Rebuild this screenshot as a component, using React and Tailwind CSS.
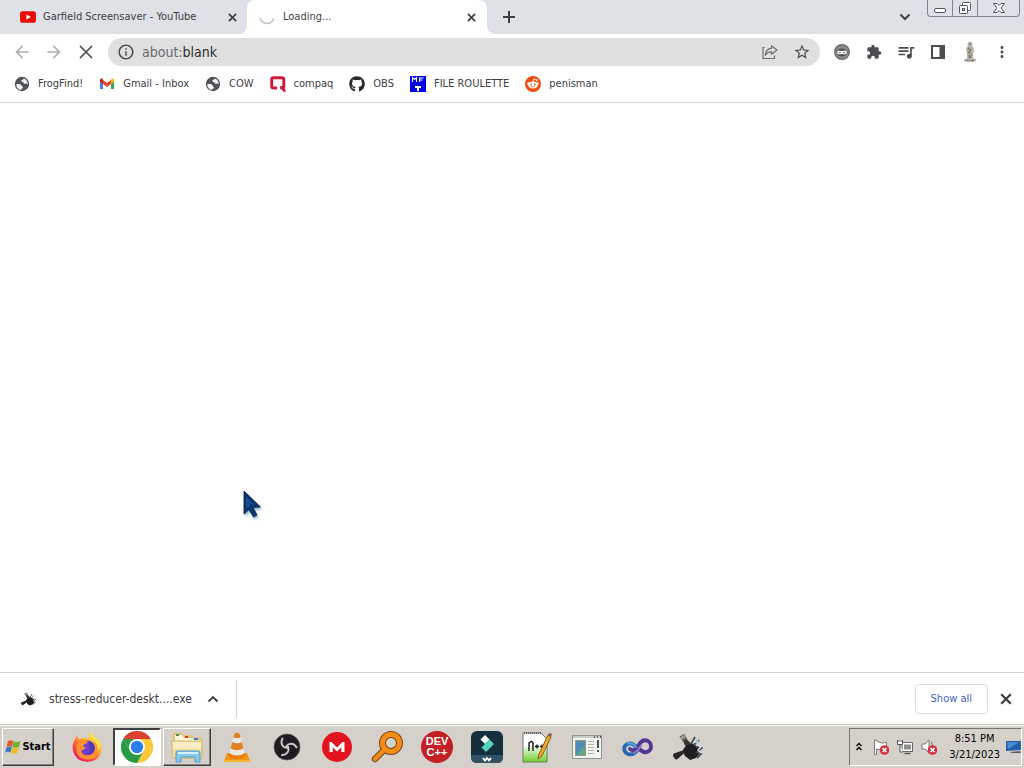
import React from "react";
import {
  MdArrowBack,
  MdArrowForward,
  MdInfoOutline,
  MdStarBorder,
  MdExtension,
  MdQueueMusic,
  MdMoreVert,
} from "react-icons/md";
import { FaGithub } from "react-icons/fa";

const CloseIcon = ({ className }) => (
  <svg viewBox="0 0 10 10" className={className} fill="none" stroke="currentColor" strokeWidth="1.900" aria-hidden="true">
    <path d="m1 1 8 8M9 1 1 9" />
  </svg>
);

const PlusIcon = () => (
  <svg viewBox="0 0 12 12" className="size-3" fill="none" stroke="currentColor" strokeWidth="2" aria-hidden="true">
    <path d="M6 0v12M0 6h12" />
  </svg>
);

const ChevronDown = () => (
  <svg viewBox="0 0 12 8" className="h-2 w-3" fill="none" stroke="currentColor" strokeWidth="2" aria-hidden="true">
    <path d="m1.500 1.500 4.500 4.500 4.500-4.500" />
  </svg>
);

const ChevronUp = () => (
  <svg viewBox="0 0 12 8" className="h-2 w-3" fill="none" stroke="currentColor" strokeWidth="1.800" aria-hidden="true">
    <path d="m1.500 6.500 4.500-4.500 4.500 4.500" />
  </svg>
);

const GlobeIcon = () => (
  <svg viewBox="0 0 16 16" className="size-4" aria-hidden="true">
    <circle cx="8" cy="8" r="7.200" fill="#505357" />
    <path d="M2.300 8.200c2.200-.3 4.800-.1 5.100 1.300.2 1 1.700.8 1.500 2.200-.1 1-1.700 1-1.900 2.200-2.800-.4-4.900-2.900-4.700-5.700z" fill="#f4f4f4" />
    <path d="M9.600 2.600c.3 1.300-2.500 1.200-2.300 2.500.2 1.200 2 .6 2.400 1.700.4 1.200 1.700 1.400 2.300.8.600-.6 1.100.2 1.800.9.100-2.800-1.600-5.100-4.200-5.900z" fill="#f4f4f4" />
  </svg>
);

const YouTubeIcon = () => (
  <svg viewBox="0 0 16 16" className="size-4 shrink-0" aria-hidden="true">
    <rect x="0" y="2.300" width="16" height="11.400" rx="2.800" fill="#f00a0a" />
    <path d="M6.400 5.400v5.200L11 8z" fill="#fff" />
  </svg>
);

const GmailIcon = () => (
  <svg viewBox="0 0 16 16" className="size-4" aria-hidden="true">
    <path d="M1 4.200v8.900h3V7z" fill="#4285f4" />
    <path d="M15 4.200v8.900h-3V7z" fill="#34a853" />
    <path d="M12 4.300V8l3-2.300V4c0-1.500-1.600-2-2.600-1.200z" fill="#fbbc04" />
    <path d="M4 8V4l4 3.100L12 4v4l-4 3z" fill="#ea4335" />
    <path d="M1 4v1.700L4 8V4.300L3.600 2.800C2.600 2 1 2.500 1 4z" fill="#c5221f" />
  </svg>
);

const CompaqIcon = () => (
  <svg viewBox="0 0 16 16" className="size-4" aria-hidden="true">
    <path
      d="M7 12H3.500Q1.700 12 1.700 10.200V3.600Q1.700 1.800 3.500 1.800H12Q13.800 1.800 13.800 3.600V10.500Q13.800 11.800 12.300 11.800H10.200"
      fill="none"
      stroke="#cf1736"
      strokeWidth="2.900"
    />
    <path d="M9.500 10.500h4.500L16 15.800h-2.500z" fill="#cf1736" />
  </svg>
);

const FileIcon = () => (
  <svg viewBox="0 0 16 16" className="size-4" aria-hidden="true">
    <path d="M0 0h16v16H0z" fill="#0000e8" />
    <path d="M2.500 6V1.500l2 2 2-2V6M9.500 6V2h4M9.500 4h3" fill="none" stroke="#fff" strokeWidth="1.100" />
    <path d="M5 10h6v2H9v3H7v-3H5z" fill="#fff" />
  </svg>
);

const RedditIcon = () => (
  <svg viewBox="0 0 16 16" className="size-4" aria-hidden="true">
    <circle cx="8" cy="8" r="8" fill="#f24a0c" />
    <path d="M8 6l.7-3 2.600.6" fill="none" stroke="#fff" strokeWidth=".8" />
    <circle cx="11.600" cy="3.900" r="1" fill="#fff" />
    <circle cx="3.500" cy="7.700" r="1.400" fill="#fff" />
    <circle cx="12.500" cy="7.700" r="1.400" fill="#fff" />
    <ellipse cx="8" cy="9" rx="4.700" ry="3.400" fill="#fff" />
    <circle cx="6.100" cy="8.400" r=".9" fill="#f24a0c" />
    <circle cx="9.900" cy="8.400" r=".9" fill="#f24a0c" />
    <path d="M6 10.400q2 1.300 4 0" fill="none" stroke="#f24a0c" strokeWidth=".7" />
  </svg>
);

const SpinnerIcon = () => (
  <svg viewBox="0 0 16 16" className="size-4 shrink-0" aria-hidden="true">
    <path d="M1.200 9a7 7 0 0 0 13.500.5" fill="none" stroke="#c9cbd2" strokeWidth="1.800" />
  </svg>
);

const ShareIcon = () => (
  <svg viewBox="0 0 18 18" className="size-[18px]" fill="none" stroke="#6b6d70" strokeWidth="1.200" aria-hidden="true">
    <path d="M3.500 4.500H2v11h11.500v-3" />
    <path d="M10.500 2.800 16 7l-5.500 4.200V8.800C7.500 8.700 6 9.800 4.300 12.300 4.700 7.800 7.200 5.600 10.500 5.200z" strokeLinejoin="round" />
  </svg>
);

const IncognitoBadge = () => (
  <svg viewBox="0 0 16 16" className="size-4" aria-hidden="true">
    <circle cx="8" cy="8" r="8" fill="#6c6c6c" />
    <circle cx="8" cy="8" r="6.600" fill="#8d8d8d" />
    <path d="M2.500 6.500Q8 2.500 13.500 6.500L12.800 10Q11 12.800 8 12.600 5 12.800 3.200 10z" fill="#484848" />
    <path d="M3.300 6.800q2.500-.8 4.700.2 2.200-1 4.700-.2v2.700Q10.500 11.200 8 10 5.500 11.200 3.300 9.500z" fill="#f1f1f1" />
    <circle cx="6" cy="8.500" r=".8" fill="#666" />
    <circle cx="10" cy="8.500" r=".8" fill="#666" />
  </svg>
);

const SidePanelIcon = () => (
  <svg viewBox="0 0 14 14" className="size-3.5" aria-hidden="true">
    <path d="M1 1h12v12H1z" fill="#fff" stroke="#4b4d50" strokeWidth="2" />
    <path d="M8.500 1H13v12H8.500z" fill="#4b4d50" />
  </svg>
);

const StatueIcon = () => (
  <svg viewBox="0 0 14 22" className="h-[22px] w-3.5" aria-hidden="true">
    <path d="M1 20q0-2.500 3-2.600L4 11 3 9.600 3.600 6l1.400-.8Q3.500.9 7 .8q3.500.1 2 4.400L10.400 6l.8 4-1.300 2 .5 5.400q3 .1 3 2.600Q7 22 1 20z" fill="#b7b3a6" />
    <path d="M5 7l2.500 2L5.500 11.500l3 1M6 3h2M5.800 14l1 3 2-3M2.500 19.500h3m2 0H11" fill="none" stroke="#77756c" strokeWidth="1.200" />
  </svg>
);

const HammerIcon = ({ small }) => (
  <svg viewBox="0 0 32 32" className={small ? "size-4 shrink-0" : "size-8"} aria-hidden="true">
    <path d="M17 17 7 25" stroke="#37302d" strokeWidth="3.500" />
    <path d="m10 20-7 2.500Q1 24 3 26.500q1.500 3 3.500 1.500l5.500-5z" fill="#2b2423" />
    <path d="m8.500 5.500 5-2.500 3 6 4 4-5 5-3-7z" fill="#3a3635" />
    <path d="m9 6 4.500-2.500 1.500 3-4.500 2.500z" fill="#a09a95" />
    <path d="m11.500 10 4.500-3" stroke="#827d79" />
    <path d="m13 17 7-5 7 4 2 6-4 5-6 2-5-4-2-4z" fill="#1e1e20" />
    <path d="m20 13 4-7M23 14l5-5M25 16l6 1-5 4 4 2-4 4" fill="none" stroke="#45505b" strokeWidth="1.800" />
    <path d="m23 10 3 2 1-3m0 5 3 2-3 3 3 3" fill="none" stroke="#dfe8ef" strokeWidth="1.200" />
  </svg>
);

const CursorIcon = () => (
  <svg viewBox="0 0 24 32" className="h-8 w-6 drop-shadow-[1px_2px_1px_rgba(80,150,180,0.7)]" aria-hidden="true">
    <path d="M1 1v23l5-4.500 4.500 7.500 3.500-2-4-7.500 7.500-.5z" fill="#0b3470" stroke="#0a2147" strokeWidth=".8" />
    <path d="M3 7v12l3-3 2 1-1-3 5 1z" fill="#174c91" />
  </svg>
);

const WindowsFlag = () => (
  <svg viewBox="0 0 16 16" className="size-4 shrink-0" aria-hidden="true">
    <path d="M3 2.200q2.600-1.800 5.200-.2L6.900 7.700q-2.800-1.400-5.400.2z" fill="#e2562a" />
    <path d="M8.600 2.300q3.200 1.500 7 0L14 8q-3.500 1.400-6.700-.1z" fill="#76ad35" />
    <path d="M1.400 8.400q2.600-1.600 5.400-.2L5.400 13.600Q2.700 12 .1 13.800z" fill="#3878c2" />
    <path d="M7.200 8.500q3.200 1.400 6.600 0l-1.600 5.600q-3.300 1.300-6.400-.3z" fill="#f3b728" />
  </svg>
);

const FirefoxIcon = () => (
  <svg viewBox="0 0 32 32" className="size-8" aria-hidden="true">
    <defs>
      <linearGradient id="fox" x1=".85" y1=".1" x2=".2" y2=".95">
        <stop offset="0" stopColor="#fff04a" />
        <stop offset=".35" stopColor="#ffb12c" />
        <stop offset=".65" stopColor="#ff5b36" />
        <stop offset="1" stopColor="#e8196f" />
      </linearGradient>
    </defs>
    <path d="M4 8.500q.5-2.500 2-4 .5 2.500 2.500 4Q11 6 14.500 7l2 1q3-2.500 2-7 4 2 6.500 7l1.500-1q4.500 6 4 12-1.500 11-14 12Q4 30 2 20 .500 13 4 8.500z" fill="url(#fox)" />
    <circle cx="16.500" cy="17" r="7.500" fill="#6b3fd0" />
    <path d="M6.500 12.500q4-4.500 10-2.500 1 2-3.500 3.500l-1 1.500 3 2-5 3q1.500 4.500 7 4.500 7.500-.5 7.500-8 0-4-3-6.500 8 3 6.500 11-3 8-12 7.500Q6 27.500 5.500 19q-.5-4 1-6.500z" fill="#ff9130" />
    <path d="M18 10q6 1.500 5.500 7.500-1 5-6.500 5.500 3-3 2-7.500-.5-3-1-5.500z" fill="#5437b5" />
    <path d="M20 7q8 5 6.500 14 4-6 1-12l-2-2 1 4q-3-5-7-7z" fill="#ffe04b" />
  </svg>
);

const ChromeIcon = () => (
  <svg viewBox="0 0 32 32" className="size-8" aria-hidden="true">
    <path d="M16 16 2.140 8A16 16 0 0 1 29.860 8z" fill="#dc4030" />
    <path d="M16 8h13.860A16 16 0 0 1 16 32l6.930-12z" fill="#fcc934" />
    <path d="M2.140 8A16 16 0 0 0 16 32l6.930-12L16 16 9.070 20z" fill="#2b9a47" />
    <path d="M2.140 8 9.070 20 16 8z" fill="#2b9a47" />
    <path d="M2.140 8 16 8H29.860" fill="none" />
    <circle cx="16" cy="16" r="8" fill="#fff" />
    <circle cx="16" cy="16" r="6.200" fill="#2b7de9" />
  </svg>
);

const ExplorerIcon = () => (
  <svg viewBox="0 0 34 32" className="h-8 w-[34px]" aria-hidden="true">
    <path d="M3 4q0-2 2-2h7l2 2h8l2 2h7l1 2v20H3z" fill="#dfc47a" />
    <path d="M5 4h7l2 3h8l2 2h7v4H5z" fill="#fff7d5" />
    <path d="M6 3h3v2H6z" fill="#3a9b4c" />
    <path d="M15 5h3v2h-3z" fill="#cf4339" />
    <path d="M24 7h4v2h-4z" fill="#3681c3" />
    <path d="M2 10h30v17H2z" fill="#f0dd9c" stroke="#cfb970" />
    <path d="M3 11h28v7H3z" fill="#f8ecc0" />
    <path d="M6 31V22q0-2 2-2h20q2 0 2 2v9h-5v-5H11v5z" fill="#83c9ed" stroke="#4a9dce" />
    <path d="M8 22h20" stroke="#d4f0fc" strokeWidth="2" />
  </svg>
);

const VlcIcon = () => (
  <svg viewBox="0 0 32 32" className="size-8" aria-hidden="true">
    <path d="M6 22h20l3 8H3z" fill="#f49419" />
    <path d="M3 29h26v2H3z" fill="#fbb62f" />
    <path d="M13.500 2.500q2.500-1.500 5 0L24 24q-8 5-16 0z" fill="#ece9e4" />
    <path d="M13.500 2.500q2.500-1.500 5 0l1 4q-3.500 1.500-7 0zM11.300 11q4.700 2.500 9.400 0l1.700 6.500q-6.400 3.500-12.800 0z" fill="#e08222" />
    <path d="M8 22q8 5 16 0l1 3.500q-9 5-18 0z" fill="#e97d13" />
  </svg>
);

const ObsIcon = () => (
  <svg viewBox="0 0 28 28" className="size-7" aria-hidden="true">
    <circle cx="14" cy="14" r="13" fill="#1e1c1f" stroke="#5a585a" strokeWidth=".8" />
    <g fill="none" stroke="#c9c7ca" strokeWidth="1.900" strokeLinecap="round">
      <path d="M14 15C9.500 14.500 7 10.500 9.500 5.500" />
      <path d="M14 15C9.500 14.500 7 10.500 9.500 5.500" transform="rotate(120 14 14)" />
      <path d="M14 15C9.500 14.500 7 10.500 9.500 5.500" transform="rotate(240 14 14)" />
    </g>
  </svg>
);

const MegaIcon = () => (
  <svg viewBox="0 0 30 30" className="size-[30px]" aria-hidden="true">
    <circle cx="15" cy="15" r="15" fill="#e3141f" />
    <path d="M7.500 20V10h2L15 15.500 20.500 10h2v10h-3.200v-4.800L15 19.500l-4.300-4.300V20z" fill="#fff" />
  </svg>
);

const SearchIcon = () => (
  <svg viewBox="0 0 32 32" className="size-8" aria-hidden="true">
    <path d="M14 18 4 28" stroke="#744318" strokeWidth="6.500" strokeLinecap="round" />
    <circle cx="20" cy="12" r="8.500" fill="none" stroke="#744318" strokeWidth="7" />
    <path d="M14 18 4 28" stroke="#f58c16" strokeWidth="4.500" strokeLinecap="round" />
    <circle cx="20" cy="12" r="8.500" fill="none" stroke="#f58c16" strokeWidth="5" />
  </svg>
);

const DevIcon = () => (
  <span className="flex size-8 flex-col items-center justify-center rounded-full bg-[#c51f26] font-['Liberation_Sans',sans-serif] text-[11px] leading-[11px] font-bold text-white">
    <span>DEV</span>
    <span>C++</span>
  </span>
);

const FilmoraIcon = () => (
  <svg viewBox="0 0 32 32" className="size-8" aria-hidden="true">
    <rect width="32" height="32" rx="6" fill="#14303f" />
    <path d="M0 24h32v2q0 6-6 6H6q-6 0-6-6z" fill="#315166" />
    <path d="m14 4 4.500 4.500L14 13 9.500 8.500z" fill="#f4ffff" />
    <path d="m18.500 8.500 4.500 4.500-8 8-4.500-4.500z" fill="#52d6bb" />
    <path d="m12 27 2 2.500 2-2.500 2 2.500 2-2.500" fill="none" stroke="#fff" strokeWidth="2" />
  </svg>
);

const NotepadIcon = () => (
  <svg viewBox="0 0 32 32" className="size-8" aria-hidden="true">
    <defs>
      <linearGradient id="note" x2="0" y2="1">
        <stop offset=".4" stopColor="#fff" />
        <stop offset="1" stopColor="#6fd02b" />
      </linearGradient>
    </defs>
    <path d="M2 2h18l6 6v23H2z" fill="url(#note)" stroke="#6e7d68" />
    <path d="M3 2h17" stroke="#666" strokeWidth="2" strokeDasharray="1 1" />
    <path d="M8 20v-8q3-3 4 0v8M14 15.500h4m-2-2v4M19 15.500h4m-2-2v4" fill="none" stroke="#161616" strokeWidth="1.400" />
    <path d="m27 4-9 19-1 5 4-3L30 6z" fill="#eca928" stroke="#85601f" />
    <path d="m27 4 3 2 1-3-3-1z" fill="#8e5948" />
  </svg>
);

const DocumentIcon = () => (
  <svg viewBox="0 0 32 32" className="size-8" aria-hidden="true">
    <path d="M1.500 4.500h29v23h-29z" fill="#f4f4ef" stroke="#8c9392" />
    <path d="M2 5h28v2H2z" fill="#c9cecb" />
    <path d="M23 5h1v2h-1zm3 0h1v2h-1zm3 0h1v2h-1z" fill="#555" />
    <path d="M4.500 9.500h10v15h-10z" fill="#4f8db4" stroke="#8b9996" />
    <path d="m5 24 9-9v9z" fill="#5ca780" />
    <path d="M17 10.500h6m-6 3h6m-6 3h6m-6 3h6m-6 3h6" stroke="#b0b3b1" />
    <path d="M27 9v8m0 2v2" stroke="#46565f" strokeWidth="2" />
  </svg>
);

const InfinityIcon = () => (
  <svg viewBox="0 0 32 32" className="size-8" fill="none" strokeLinecap="round" aria-hidden="true">
    <path d="M17 18.500C14 23 10 24 7 23c-5-2-5-8-.5-10 3-1.200 6 0 8 2.500" stroke="#2868b5" strokeWidth="3.800" />
    <path d="M9 18c4 3 6 0 9-4.500C20.500 9.500 24 8.500 27 10c4 2.500 4 8.500 0 10.500-3 1.500-6.500 0-9-3" stroke="#513792" strokeWidth="3.800" />
    <path d="M13 22q4-2 7-7.500" stroke="#8d78cb" strokeWidth="2" />
    <path d="M7 12.500q4-1 8 3.500" stroke="#55a9dc" strokeWidth="2" />
  </svg>
);

const RedBadge = () => (
  <g>
    <circle cx="11.500" cy="11" r="4.800" fill="#cf3441" />
    <path d="m9.500 9 4 4m0-4-4 4" stroke="#fff" strokeWidth="1.500" />
  </g>
);

const FlagTray = () => (
  <svg viewBox="0 0 16 16" className="size-4" aria-hidden="true">
    <path d="M1.500 1v14.500h2V10l5 1 5-1V3.500L8.500 4l-5-2V1z" fill="#fff" stroke="#7a7a7a" />
    <RedBadge />
  </svg>
);

const NetworkTray = () => (
  <svg viewBox="0 0 16 16" className="size-4" aria-hidden="true">
    <path d="M5 3.500h10.500v9H5z" fill="#fff" stroke="#666" />
    <path d="M7 5.500h7v5H7z" fill="#8d8f8c" />
    <path d="M7.500 14.500h6" stroke="#555" strokeWidth="1.500" />
    <path d="M.5 1v4.500h5V1M2 1v2m2-2v2M3 6v7h3" fill="#fff" stroke="#555" />
  </svg>
);

const VolumeTray = () => (
  <svg viewBox="0 0 16 16" className="size-4" aria-hidden="true">
    <path d="M1 5h3l4-4v13l-4-4H1z" fill="#fff" stroke="#777" />
    <path d="M10 3q2 2 1 4" fill="none" stroke="#777" />
    <RedBadge />
  </svg>
);

const DesktopTray = () => (
  <svg viewBox="0 0 16 16" className="size-4" aria-hidden="true">
    <path d="M1 2h15v9L1 12z" fill="#245ea9" />
    <path d="m2 3 12 .5L3 10z" fill="#498cd0" />
    <path d="m5 13 10-1 1 2H7z" fill="#555b62" />
  </svg>
);

const DoubleChevron = () => (
  <svg viewBox="0 0 8 10" className="h-2.5 w-2" fill="none" stroke="#111" strokeWidth="1.500" aria-hidden="true">
    <path d="m1.500 4 2.500-2.500L6.500 4m-5 4L4 5.500 6.500 8" />
  </svg>
);

const bookmarks = [
  { label: "FrogFind!", icon: <GlobeIcon /> },
  { label: "Gmail - Inbox", icon: <GmailIcon /> },
  { label: "COW", icon: <GlobeIcon /> },
  { label: "compaq", icon: <CompaqIcon /> },
  { label: "OBS", icon: <FaGithub className="size-4 text-[#24292e]" /> },
  { label: "FILE ROULETTE", icon: <FileIcon /> },
  { label: "penisman", icon: <RedditIcon /> },
];

const extensions = [
  { label: "Extension", icon: <IncognitoBadge /> },
  { label: "Extensions", icon: <MdExtension className="size-4" /> },
  { label: "Media controls", icon: <MdQueueMusic className="size-5" /> },
  { label: "Side panel", icon: <SidePanelIcon /> },
  { label: "Profile", icon: <StatueIcon /> },
  { label: "Menu", icon: <MdMoreVert className="size-[18px]" /> },
];

const raised =
  "border border-t-white border-l-white border-r-[#404040] border-b-[#404040] shadow-[inset_-1px_-1px_0_#808080]";

const apps = [
  { label: "Firefox", icon: <FirefoxIcon /> },
  {
    label: "Chrome",
    icon: <ChromeIcon />,
    frame: "border-2 border-t-[#404040] border-l-[#404040] border-r-white border-b-white bg-white",
  },
  { label: "File Explorer", icon: <ExplorerIcon />, frame: raised },
  { label: "VLC", icon: <VlcIcon /> },
  { label: "OBS Studio", icon: <ObsIcon /> },
  { label: "MEGA", icon: <MegaIcon /> },
  { label: "Search", icon: <SearchIcon /> },
  { label: "Dev-C++", icon: <DevIcon /> },
  { label: "Filmora", icon: <FilmoraIcon /> },
  { label: "Notepad++", icon: <NotepadIcon /> },
  { label: "Document viewer", icon: <DocumentIcon /> },
  { label: "Visual Studio", icon: <InfinityIcon /> },
  { label: "Stress Reducer", icon: <HammerIcon /> },
];

function TabStrip() {
  return (
    <header className="flex h-[34px] bg-white">
      <div className="flex w-[247px] items-center rounded-br-lg bg-[#dee1e6] pr-[7px] pl-5">
        <YouTubeIcon />
        <span className="ml-[7px] flex-1 truncate">Garfield Screensaver - YouTube</span>
        <button aria-label="Close tab" className="flex size-4 items-center justify-center">
          <CloseIcon className="size-[9px]" />
        </button>
      </div>
      <div className="w-60 bg-[#dee1e6]">
        <div className="flex h-full items-center rounded-t-lg bg-white pr-2 pl-3">
          <SpinnerIcon />
          <span className="ml-2 flex-1 truncate">Loading...</span>
          <button aria-label="Close tab" className="flex size-4 items-center justify-center">
            <CloseIcon className="size-[9px]" />
          </button>
        </div>
      </div>
      <div className="flex flex-1 items-start justify-between rounded-bl-lg bg-[#dee1e6] pr-1 pl-3">
        <button aria-label="New tab" className="flex h-[34px] w-5 items-center justify-center">
          <PlusIcon />
        </button>
        <div className="flex items-start gap-3">
          <button aria-label="Search tabs" className="flex h-[34px] w-5 items-center justify-center">
            <ChevronDown />
          </button>
          <div className="flex h-[17px] divide-x divide-[#7d8794] rounded-b border border-t-0 border-[#7d8794] text-[#4c5561]">
            <button aria-label="Minimize" className="flex w-[25px] items-center justify-center">
              <svg viewBox="0 0 14 14" className="size-3.5" aria-hidden="true">
                <rect x="1.500" y="7.500" width="11" height="4" rx="1.500" fill="#fff" stroke="currentColor" />
              </svg>
            </button>
            <button aria-label="Restore" className="flex w-[25px] items-center justify-center">
              <svg viewBox="0 0 14 14" className="size-3.5" fill="#fff" stroke="currentColor" aria-hidden="true">
                <rect x="4.500" y="1.500" width="8" height="8" rx="1" />
                <rect x="1.500" y="4.500" width="8" height="8" rx="1" />
                <rect x="4.500" y="7.500" width="2" height="2" />
              </svg>
            </button>
            <button aria-label="Close" className="flex w-[41px] items-center justify-center">
              <svg viewBox="0 0 14 12" className="h-3 w-3.5" fill="#fff" stroke="currentColor" aria-hidden="true">
                <path d="M1.500 1.500h3.500l2 2 2-2h3.500L9 6l3.500 4.500H9l-2-2-2 2H1.500L5 6z" />
              </svg>
            </button>
          </div>
        </div>
      </div>
    </header>
  );
}

function Toolbar() {
  return (
    <div className="flex items-center gap-2 px-2 pt-1 text-[#4b4d50]">
      <div className="flex gap-1">
        <button aria-label="Back" className="flex size-7 items-center justify-center text-[#aeb0b2]">
          <MdArrowBack className="size-5" />
        </button>
        <button aria-label="Forward" className="flex size-7 items-center justify-center text-[#aeb0b2]">
          <MdArrowForward className="size-5" />
        </button>
        <button aria-label="Stop" className="flex size-7 items-center justify-center">
          <svg viewBox="0 0 14 14" className="size-3.5" stroke="currentColor" strokeWidth="1.700" aria-hidden="true">
            <path d="m1 1 12 12M13 1 1 13" />
          </svg>
        </button>
      </div>
      <div className="flex h-7 flex-1 items-center rounded-full bg-[#e0e0e0] px-2">
        <MdInfoOutline className="mx-px size-[18px]" />
        <div className="relative ml-1.5 flex-1 text-[14px] leading-5">
          <input
            aria-label="Address"
            defaultValue="about:blank"
            className="w-full bg-transparent text-transparent caret-black outline-none"
          />
          <span aria-hidden="true" className="pointer-events-none absolute inset-0 text-[#65686c]">
            about:<span className="text-[#292b2e]">blank</span>
          </span>
        </div>
        <div className="flex items-center gap-3.5 pr-px">
          <button aria-label="Share"><ShareIcon /></button>
          <button aria-label="Bookmark"><MdStarBorder className="size-[18px]" /></button>
        </div>
      </div>
      <div className="flex gap-1">
        {extensions.map((item) => (
          <button key={item.label} aria-label={item.label} className="flex size-7 items-center justify-center">
            {item.icon}
          </button>
        ))}
      </div>
    </div>
  );
}

export default function App() {
  return (
    <div className="flex min-h-screen flex-col bg-white font-['DejaVu_Sans_Condensed','DejaVu_Sans',sans-serif] text-[11px] leading-4 text-[#3c4043]">
      <TabStrip />
      <Toolbar />
      <nav aria-label="Bookmarks" className="flex h-[37px] items-center gap-4 border-b border-[#d5d7da] px-3.5">
        {bookmarks.map((item) => (
          <a key={item.label} href="#" className="flex items-center gap-2 whitespace-nowrap">
            {item.icon}
            {item.label}
          </a>
        ))}
      </nav>
      <main className="relative flex-1">
        <div className="absolute top-[387px] left-[243px]">
          <CursorIcon />
        </div>
      </main>
      <section aria-label="Downloads" className="flex h-[52px] items-center border-t border-[#d0d2d5]">
        <div className="flex h-[38px] w-[237px] items-center border-r border-[#cfd1d4] pr-[17px] pl-5">
          <HammerIcon small />
          <span className="ml-[13px] flex-1 truncate text-[12px]">stress-reducer-deskt....exe</span>
          <button aria-label="Download options">
            <ChevronUp />
          </button>
        </div>
        <div className="flex flex-1 items-center justify-end gap-2.5 pr-2.5">
          <button className="h-[30px] rounded border border-[#dadce0] px-[15px] text-[#3f63c8]">Show all</button>
          <button aria-label="Close downloads" className="flex size-4 items-center justify-center">
            <CloseIcon className="size-3" />
          </button>
        </div>
      </section>
      <footer className="flex h-11 items-start border-t border-[#c6c3bd] bg-[#d5d1ca] px-0.5 pt-[3px] text-black shadow-[inset_0_1px_0_#fff]">
        <button className={`flex h-[38px] w-[52px] items-center justify-center gap-px font-bold ${raised}`}>
          <WindowsFlag />
          Start
        </button>
        <div className="ml-[9px] flex gap-0.5">
          {apps.map((app) => (
            <button
              key={app.label}
              aria-label={app.label}
              className={`flex h-[38px] w-12 items-center justify-center ${app.frame || ""}`}
            >
              {app.icon}
            </button>
          ))}
        </div>
        <div className="ml-auto flex h-[38px] items-center border border-t-[#77746f] border-r-white border-b-white border-l-[#77746f] pl-[5px]">
          <button aria-label="Show hidden icons"><DoubleChevron /></button>
          <div className="ml-2.5 flex gap-2">
            <FlagTray />
            <NetworkTray />
            <VolumeTray />
          </div>
          <div className="ml-3 flex flex-col items-center whitespace-nowrap">
            <span>8:51 PM</span>
            <span>3/21/2023</span>
          </div>
          <div className="ml-[5px]"><DesktopTray /></div>
        </div>
      </footer>
    </div>
  );
}
